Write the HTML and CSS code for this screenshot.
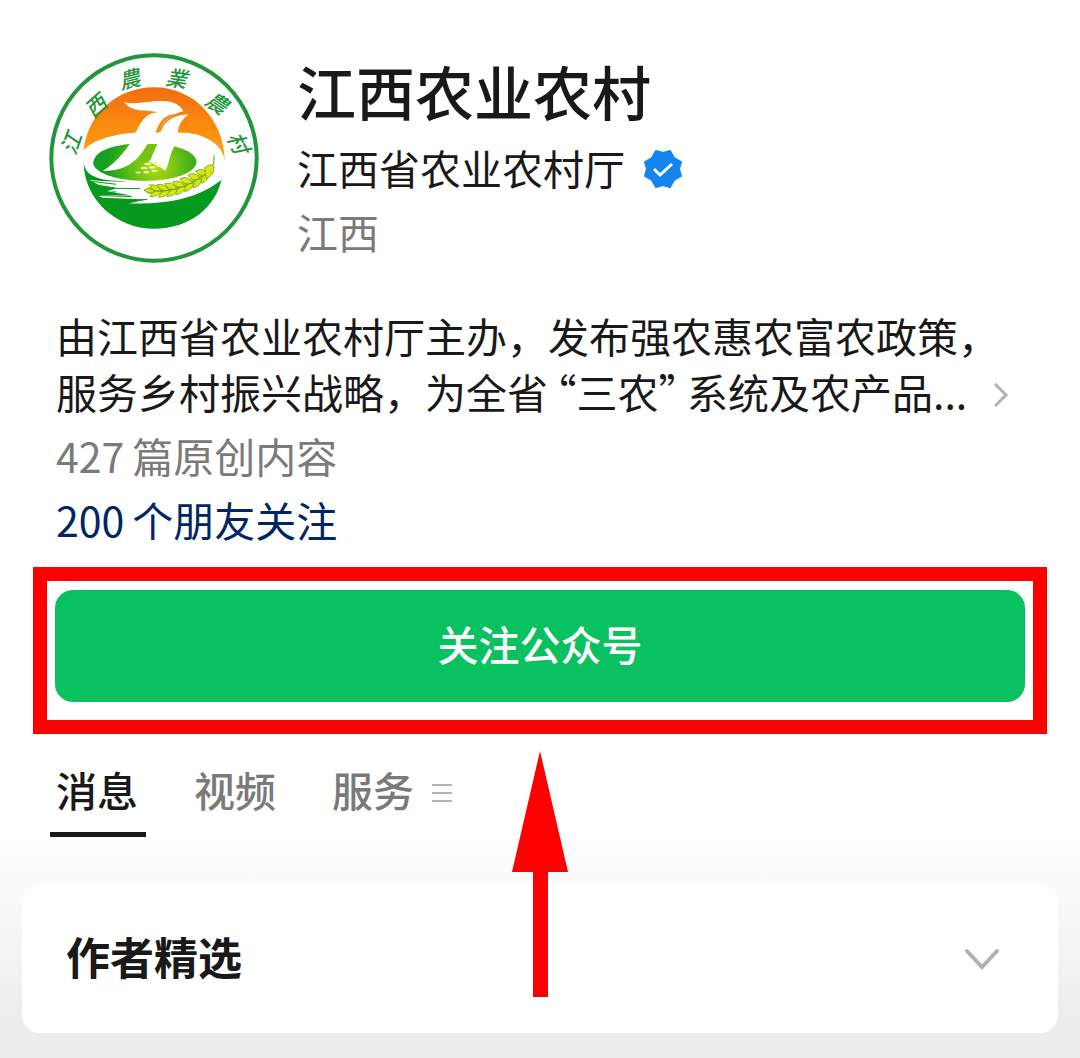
FILE: index.html
```html
<!DOCTYPE html>
<html lang="zh-CN">
<head>
<meta charset="utf-8">
<meta name="viewport" content="width=device-width, initial-scale=1">
<title>江西农业农村</title>
<link rel="stylesheet" href="styles.css">
</head>
<body>
<main class="page">
  <header class="profile">
    <svg class="logo" viewBox="26 22 632 632" role="img" aria-label="江西农业农村">
      <defs>
        <linearGradient id="sun" x1="0" y1="0" x2="0" y2="1">
          <stop offset="0" stop-color="#f36c10"/>
          <stop offset="1" stop-color="#ffa60d"/>
        </linearGradient>
        <radialGradient id="field" cx="350" cy="365" r="150" gradientUnits="userSpaceOnUse">
          <stop offset="0" stop-color="#b4dc0c"/>
          <stop offset="1" stop-color="#14a020"/>
        </radialGradient>
      </defs>
      <circle cx="342" cy="338" r="309" fill="#fff" stroke="#22963a" stroke-width="12"/>
      <path d="M130 315C142 205 232 125 342 125C462 125 552 222 555 345C530 290 462 262 400 262C300 255 180 262 130 315Z" fill="url(#sun)"/>
      <path d="M130 352C136 385 160 405 240 407C330 420 440 404 530 360L547 395C530 485 450 551 342 551C230 551 133 465 130 352Z" fill="#07991d"/>
      <path d="M148 404C290 418 430 404 524 352C560 360 552 392 545 404C480 452 410 477 265 475L320 463L188 458L168 449L275 451L200 438L228 430L178 420Z" fill="#fff"/>
      <ellipse cx="314" cy="350" rx="156" ry="57" fill="url(#field)"/>
      <path d="M130 322C180 275 255 262 300 262L292 296C225 288 150 315 160 368C145 360 132 342 130 322Z" fill="#fff"/>
      <path d="M440 262C503 268 552 302 555 348L532 362L458 373C475 360 478 330 458 318C438 301 405 296 380 296L388 262Z" fill="#fff"/>
      <path d="M252 170C300 181 350 157 398 171Q422 179 430 197C400 204 372 222 349 266L326 290C300 335 270 378 188 377C232 350 272 300 290 255C308 216 329 200 354 200C318 192 278 202 252 170Z" fill="#fff"/>
      <path d="M446 206C405 238 420 258 400 310C388 332 386 362 376 376C358 360 318 352 322 338C336 312 352 285 366 250C380 222 405 208 446 206Z" fill="#fff"/>
      <path d="M282 262L420 262L408 297L278 297Z" fill="#fff"/>
      <path d="M412 205C378 206 358 224 347 262L354 262C366 232 384 214 412 205Z" fill="#f58a12"/>
      <path d="M324 296L352 296L330 346L292 350Q312 322 324 296Z" fill="#74c212"/>
      <g fill="#f2f8b0">
        <ellipse cx="323" cy="356" rx="10" ry="4"/><ellipse cx="346" cy="351" rx="10" ry="4"/>
        <ellipse cx="312" cy="368" rx="10" ry="4"/><ellipse cx="336" cy="366" rx="10" ry="4"/><ellipse cx="360" cy="361" rx="10" ry="4"/>
        <ellipse cx="294" cy="382" rx="8" ry="3"/><ellipse cx="319" cy="381" rx="9" ry="4"/><ellipse cx="343" cy="377" rx="9" ry="4"/>
      </g>
      <g fill="none" stroke="#07991d" stroke-width="3">
        <path d="M150 408L228 417M178 421L225 428M188 429L300 430M180 442L228 440M168 451L275 454M256 466L322 463"/>
      </g>
      <path d="M330 436Q430 440 508 380" fill="none" stroke="#c9de17" stroke-width="22" stroke-linecap="round"/>
      <path d="M312 436Q430 448 517 368Q524 350 523 330" fill="none" stroke="#5d9e17" stroke-width="3"/>
      <g fill="#d5e617" stroke="#659c12" stroke-width="2">
        <path d="M312 434Q325 424 345 438Q328 449 312 434Z"/>
        <path d="M328 419Q354 415 363 438Q338 440 328 419ZM330 454Q352 457 366 439Q341 430 330 454Z"/>
        <path d="M351 418Q376 413 387 436Q360 440 351 418ZM356 456Q378 457 391 437Q364 431 356 456Z"/>
        <path d="M374 415Q399 408 411 431Q383 437 374 415ZM381 454Q405 453 415 432Q388 428 381 454Z"/>
        <path d="M397 410Q421 401 435 423Q408 432 397 410ZM407 448Q431 447 439 424Q410 422 407 448Z"/>
        <path d="M420 400Q445 389 458 413Q431 423 420 400ZM434 439Q457 437 462 413Q434 414 434 439Z"/>
        <path d="M444 389Q468 377 481 400Q455 411 444 389ZM460 428Q483 424 485 400Q458 403 460 428Z"/>
        <path d="M467 377Q491 364 503 386Q479 398 467 377ZM485 414Q507 408 507 385Q481 389 485 414Z"/>
        <path d="M494 367Q512 352 523 363Q522 394 499 399Q497 380 494 367Z"/>
      </g>
      <g class="logo-text">
        <text transform="translate(88 292) rotate(-70)">江</text>
        <text transform="translate(163 178) rotate(-42)">西</text>
        <text transform="translate(267 96) rotate(-14)">農</text>
        <text transform="translate(410 94) rotate(8)">業</text>
        <text transform="translate(534 168) rotate(34)">農</text>
        <text transform="translate(600 290) rotate(64)">村</text>
      </g>
    </svg>
    <div class="identity">
      <h1 class="name">江西农业农村</h1>
      <p class="owner">江西省农业农村厅
        <svg class="badge" viewBox="-20 -20 40 40" role="img" aria-label="已认证">
          <path d="M-7 -18L0 -16L7 -18L11 -11L18 -7L16 0L18 7L11 11L7 18L0 16L-7 18L-11 11L-18 7L-16 0L-18 -7L-11 -11Z" fill="#1485ee" stroke="#1485ee" stroke-width="2" stroke-linejoin="round"/>
          <path d="M-9 0L-3 6L9 -5" fill="none" stroke="#fff" stroke-width="3"/>
        </svg>
      </p>
      <p class="region">江西</p>
    </div>
  </header>

  <section class="about">
    <a class="intro" href="#about">
      <span class="intro-text">由江西省农业农村厅主办，发布强农惠农富农政策，<br>服务乡村振兴战略，为全省<span class="open-quote">“</span>三农<span class="close-quote">”</span>系统及农产品...</span>
      <svg class="more" viewBox="0 0 16 28" aria-hidden="true"><path d="M2 3L13 14L2 25"/></svg>
    </a>
    <p class="count"><span class="number">427</span>篇原创内容</p>
    <a class="friends" href="#friends"><span class="number">200</span>个朋友关注</a>
  </section>

  <div class="highlight">
    <button class="follow" type="button">关注公众号</button>
    <svg class="arrow" viewBox="0 0 56 246" aria-hidden="true"><path d="M28 0L56 121H36V246H21V121H0Z"/></svg>
  </div>

  <nav class="tabs">
    <button class="tab active" type="button">消息</button>
    <button class="tab" type="button">视频</button>
    <button class="tab" type="button">服务
      <svg class="menu" viewBox="0 0 20 20" aria-hidden="true"><path d="M0 2H20M0 10H20M0 18H20"/></svg>
    </button>
  </nav>

  <section class="card">
    <h2 class="card-title">作者精选</h2>
    <button class="expand" type="button" aria-label="展开">
      <svg viewBox="0 0 36 24" aria-hidden="true"><path d="M3 3L18 19L33 3"/></svg>
    </button>
  </section>
</main>
</body>
</html>
```
FILE: styles.css
```css
* {
  box-sizing: border-box;
}

body,
h1,
h2,
p {
  margin: 0;
}

body {
  background: #ededed;
  color: #191919;
  font-family: "Noto Sans CJK SC", sans-serif;
  font-size: 41px;
  line-height: 64px;
}

button {
  padding: 0;
  border: 0;
  background: none;
  color: inherit;
  font: inherit;
}

a {
  color: inherit;
  text-decoration: none;
}

svg {
  display: block;
  flex: none;
}

.page {
  min-height: 100vh;
  padding: 53px 0 25px;
  background: linear-gradient(to top, #ededed 0, #ededed 40px, #fbfbfb 180px, #fff 230px);
}

.profile {
  display: flex;
  gap: 38px;
  padding: 0 49px;
}

.logo {
  width: 210px;
  height: 210px;
}

.logo-text {
  fill: #22963a;
  font-size: 64px;
  font-style: italic;
  font-weight: 500;
  text-anchor: middle;
  dominant-baseline: central;
}

.name {
  margin-bottom: 6px;
  font-size: 59px;
  font-weight: 500;
  line-height: 76px;
}

.owner {
  display: flex;
  align-items: center;
  gap: 18px;
}

.badge {
  width: 40px;
  height: 40px;
  margin-top: 4px;
}

.region,
.count {
  color: #7a7a7a;
}

.about {
  padding: 44px 56px 0;
}

.intro {
  display: flex;
  align-items: flex-end;
  margin-bottom: 4px;
  line-height: 56px;
}

.intro-text {
  white-space: nowrap;
}

.open-quote,
.close-quote {
  font-feature-settings: "halt";
}

.open-quote {
  margin-left: 8px;
}

.close-quote {
  margin-right: 8px;
}

.more {
  width: 16px;
  height: 28px;
  margin: 0 0 10px -6px;
}

.more path,
.menu path,
.expand path {
  fill: none;
  stroke: #b2b2b2;
  stroke-width: 3;
}

.number {
  margin-right: 8px;
}

.friends {
  display: block;
  width: fit-content;
  color: #002666;
}

.highlight {
  position: relative;
  margin: 16px 33px 0;
  padding: 9px 8px 18px;
  border: 14px solid #f00;
}

.follow {
  display: block;
  width: 100%;
  height: 112px;
  padding-bottom: 6px;
  border-radius: 18px;
  background: #09c160;
  color: #fff;
  font-weight: 500;
}

.arrow {
  position: absolute;
  top: calc(100% + 31px);
  left: 50%;
  width: 56px;
  height: 246px;
  margin-left: -28px;
  fill: #f00;
}

.tabs {
  display: flex;
  gap: 42px;
  margin: 29px 50px 0;
}

.tab {
  display: flex;
  align-items: center;
  gap: 18px;
  padding: 0 8px 17px 6px;
  border-bottom: 5px solid transparent;
  color: #7a7a7a;
  font-weight: 500;
  line-height: 52px;
}

.tab.active {
  border-color: #191919;
  color: #191919;
}

.menu {
  width: 20px;
  height: 20px;
  margin-top: 8px;
}

.menu path {
  stroke-width: 2;
}

.card {
  display: flex;
  align-items: center;
  justify-content: space-between;
  margin: 47px 22px 0;
  padding: 40px 58px 45px 44px;
  border-radius: 18px;
  background: #fff;
}

.card-title {
  font-size: 44px;
  font-weight: 700;
  line-height: 64px;
}

.expand svg {
  width: 36px;
  height: 24px;
  margin-top: 8px;
}

.expand path {
  stroke-width: 4;
  stroke-linecap: round;
}
```
